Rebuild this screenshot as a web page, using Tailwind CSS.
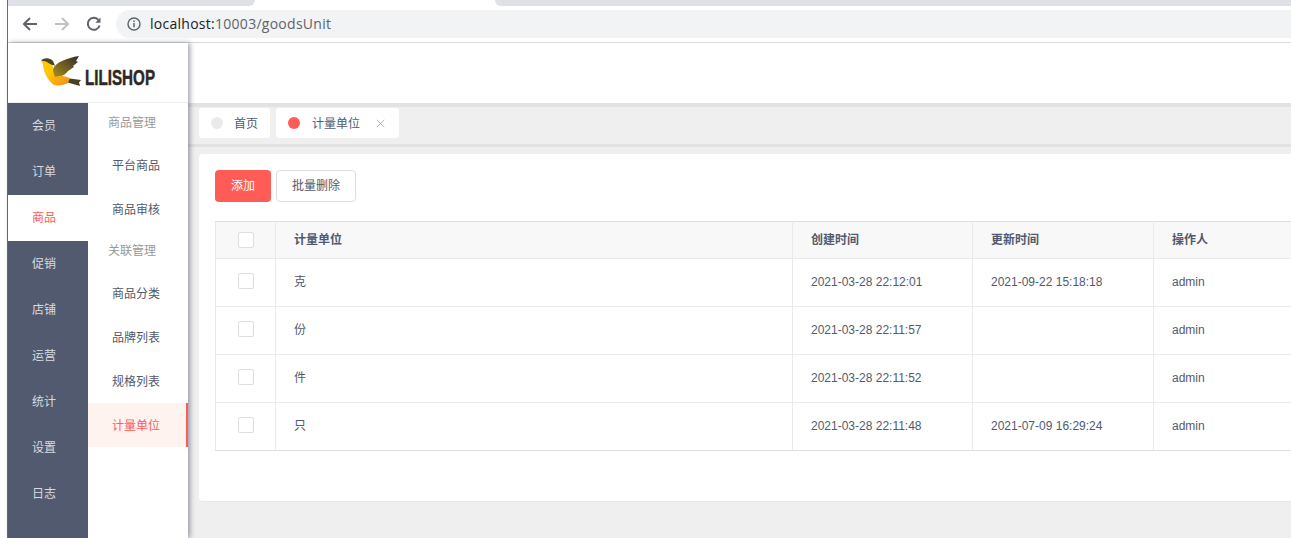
<!DOCTYPE html>
<html lang="zh">
<head>
<meta charset="utf-8">
<script src="https://cdn.jsdelivr.net/npm/@tailwindcss/browser@4"></script>
<title>goodsUnit</title>
</head>
<body class="w-[1291px] h-[538px] overflow-hidden bg-white font-['Liberation_Sans','Noto_Sans_CJK_SC',sans-serif] text-xs text-[#515a6e]">
<div class="flex h-[538px]">
  <div class="w-[8px] shrink-0 bg-white border-r border-[#6b6b6b]"></div>
  <div class="flex-1 min-w-0 flex flex-col">
    <!-- browser tab strip -->
    <div class="h-[6px] shrink-0 flex bg-white">
      <div class="w-[247px] bg-[#dee1e6] rounded-br-lg"></div>
      <div class="w-[240px]"></div>
      <div class="flex-1 bg-[#dee1e6] rounded-bl-lg"></div>
    </div>
    <!-- browser toolbar -->
    <div class="h-[37px] shrink-0 flex items-center bg-white border-b border-[#d9d9d9] pl-[14px] pb-[1px]">
      <svg class="w-4 h-4 shrink-0" viewBox="0 0 16 16" fill="none" stroke="#5f6368" stroke-width="2"><path d="M15 8H2M8 2 2 8l6 6"/></svg>
      <svg class="w-4 h-4 shrink-0 ml-[16px]" viewBox="0 0 16 16" fill="none" stroke="#bdc1c6" stroke-width="2"><path d="M1 8h13M8 2l6 6-6 6"/></svg>
      <svg class="w-4 h-4 shrink-0 ml-[16px]" viewBox="0 0 16 16" fill="none" stroke="#5f6368" stroke-width="2"><path d="M13.6 9.5A6 6 0 1 1 12.3 3.800"/><path d="M14.500 1.500v5.200H9.300z" fill="#5f6368" stroke="none"/></svg>
      <div class="flex-1 h-[28px] ml-[14px] rounded-l-[14px] bg-[#f1f3f4] flex items-center pl-[11px] font-['Open_Sans',sans-serif] text-[14px] tracking-[.27px]">
        <svg class="w-[14px] h-[14px] shrink-0" viewBox="0 0 14 14" fill="none"><circle cx="7" cy="7" r="6" stroke="#5f6368" stroke-width="1.400"/><path d="M7 6v4.200M7 3.400v1.500" stroke="#5f6368" stroke-width="1.500"/></svg>
        <span class="ml-[9px] pt-[1px] text-[#202124]">localhost:<span class="text-[#5f6368]">10003/goodsUnit</span></span>
      </div>
    </div>
    <div class="flex-1 min-h-0 flex">
      <!-- sidebar -->
      <aside class="relative z-10 w-[180px] shrink-0 flex flex-col bg-white shadow-[2px_0_5px_rgba(40,45,70,0.45)]">
        <div class="h-[60px] shrink-0 border-b border-[#eeeeee] flex items-start pl-[32px] pt-[12px]">
          <svg class="w-[43px] h-[32px] shrink-0" viewBox="0 0 43 32">
            <defs>
              <linearGradient id="w" x1="1" y1="0" x2="0" y2="1"><stop offset="0" stop-color="#2f2a28"/><stop offset="1" stop-color="#a8901a"/></linearGradient>
              <linearGradient id="b" x1="0" y1="0" x2="1" y2="1"><stop offset="0.400" stop-color="#ffc800"/><stop offset="1" stop-color="#f08a24"/></linearGradient>
            </defs>
            <path d="M26 23 41 25l-2 2.500 1 3.500-14-4z" fill="#4a4320"/>
            <path d="M1 5.500 3 9C3 15 7 25 14 30c5 1 10 0 14-2l2-5-10-3-7-6-1-7L7 4z" fill="url(#b)"/>
            <path d="M1 5.500C4 2.500 10 2.500 13 6l2 4.500C11 10 9 8 6 6.500z" fill="#4b4428"/>
            <path d="M13 14C16 7 27 3 39 1l-3 5 2 1-5 4 1 1-6 4c-2 3-5 5-9 5l-4 1c-1-3-2-5-2-8z" fill="url(#w)"/>
          </svg>
          <span class="ml-[2px] mt-[13px] text-[22px] leading-[20px] font-bold text-[#2f2725] scale-x-[.69] origin-left [-webkit-text-stroke:0.5px_#2f2725]">LILISHOP</span>
        </div>
        <div class="flex-1 min-h-0 flex">
          <nav class="w-[80px] shrink-0 bg-[#515a6e] text-[#d7dae0]">
            <div class="h-[46px] pr-[8px] flex items-center justify-center">会员</div>
            <div class="h-[46px] pr-[8px] flex items-center justify-center">订单</div>
            <div class="h-[46px] pr-[8px] flex items-center justify-center bg-white text-[#ff5c58]">商品</div>
            <div class="h-[46px] pr-[8px] flex items-center justify-center">促销</div>
            <div class="h-[46px] pr-[8px] flex items-center justify-center">店铺</div>
            <div class="h-[46px] pr-[8px] flex items-center justify-center">运营</div>
            <div class="h-[46px] pr-[8px] flex items-center justify-center">统计</div>
            <div class="h-[46px] pr-[8px] flex items-center justify-center">设置</div>
            <div class="h-[46px] pr-[8px] flex items-center justify-center">日志</div>
          </nav>
          <nav class="flex-1 min-w-0">
            <div class="h-[40px] flex items-center pl-[20px] text-[#999999]">商品管理</div>
            <div class="h-[44px] pt-[2px] flex items-center pl-[24px]">平台商品</div>
            <div class="h-[44px] pt-[2px] flex items-center pl-[24px]">商品审核</div>
            <div class="h-[40px] flex items-center pl-[20px] text-[#999999]">关联管理</div>
            <div class="h-[44px] pt-[2px] flex items-center pl-[24px]">商品分类</div>
            <div class="h-[44px] pt-[2px] flex items-center pl-[24px]">品牌列表</div>
            <div class="h-[44px] pt-[2px] flex items-center pl-[24px]">规格列表</div>
            <div class="h-[44px] pt-[2px] flex items-center pl-[24px] bg-[#fff3ef] text-[#ff5c58] border-r-2 border-[#ff5c58]">计量单位</div>
          </nav>
        </div>
      </aside>
      <!-- main -->
      <main class="flex-1 min-w-0 flex flex-col bg-[#efefef] overflow-hidden">
        <div class="h-[60px] shrink-0 bg-white"></div>
        <div class="h-[44px] shrink-0 border-t-[4px] border-b-[3px] border-[#e2e2e2] bg-[#efefef] flex gap-[6px] pl-[11px] pt-[1px]">
          <div class="w-[71px] h-[30px] rounded-[3px] bg-white flex items-center pl-[12px] pt-[1px]">
            <span class="w-[12px] h-[12px] rounded-full bg-[#e8eaec] -mt-[1px]"></span>
            <span class="ml-[11px]">首页</span>
          </div>
          <div class="w-[123px] h-[30px] rounded-[3px] bg-white flex items-center pl-[12px] pt-[1px]">
            <span class="w-[12px] h-[12px] rounded-full bg-[#ff5c58] -mt-[1px]"></span>
            <span class="ml-[12px]">计量单位</span>
            <svg class="w-[9px] h-[9px] ml-[16px] -mt-[1px]" viewBox="0 0 9 9" fill="none" stroke="#b5b8bf" stroke-width="1"><path d="M.8.8l7.400 7.400M8.200.8.800 8.200"/></svg>
          </div>
        </div>
        <div class="ml-[11px] mt-[7px] w-[1200px] h-[348px] shrink-0 rounded-[4px] bg-white border-b border-[#e8e8e8] pt-[16px] pl-[16px]">
          <div class="flex gap-[5px]">
            <button class="w-[56px] h-[32px] rounded-[4px] bg-[#ff5c58] text-white">添加</button>
            <button class="w-[80px] h-[32px] rounded-[4px] bg-white border border-[#dcdee2] text-[#515a6e]">批量删除</button>
          </div>
          <table class="mt-[19px] w-[1200px] table-fixed border-collapse border border-[#dcdee2]">
            <colgroup><col class="w-[60px]"><col class="w-[517px]"><col class="w-[180px]"><col class="w-[181px]"><col></colgroup>
            <thead>
              <tr class="h-[37px] bg-[#f8f8f9] font-bold text-left">
                <th class="border border-[#e8eaec] border-t-[#dcdee2]"><span class="block mx-auto w-[16px] h-[16px] rounded-[2px] border border-[#dcdee2] bg-white"></span></th>
                <th class="border border-[#e8eaec] border-t-[#dcdee2] pl-[18px]">计量单位</th>
                <th class="border border-[#e8eaec] border-t-[#dcdee2] pl-[18px]">创建时间</th>
                <th class="border border-[#e8eaec] border-t-[#dcdee2] pl-[18px]">更新时间</th>
                <th class="border border-[#e8eaec] border-t-[#dcdee2] pl-[18px]">操作人</th>
              </tr>
            </thead>
            <tbody>
              <tr class="h-[48px]">
                <td class="border border-[#e8eaec] pb-[3px]"><span class="block mx-auto w-[16px] h-[16px] rounded-[2px] border border-[#dcdee2] bg-white"></span></td>
                <td class="border border-[#e8eaec] pl-[18px] pb-[2px]">克</td>
                <td class="border border-[#e8eaec] pl-[18px] pb-[2px]">2021-03-28 22:12:01</td>
                <td class="border border-[#e8eaec] pl-[18px] pb-[2px]">2021-09-22 15:18:18</td>
                <td class="border border-[#e8eaec] pl-[18px] pb-[2px]">admin</td>
              </tr>
              <tr class="h-[48px]">
                <td class="border border-[#e8eaec] pb-[3px]"><span class="block mx-auto w-[16px] h-[16px] rounded-[2px] border border-[#dcdee2] bg-white"></span></td>
                <td class="border border-[#e8eaec] pl-[18px] pb-[2px]">份</td>
                <td class="border border-[#e8eaec] pl-[18px] pb-[2px]">2021-03-28 22:11:57</td>
                <td class="border border-[#e8eaec] pl-[18px] pb-[2px]"></td>
                <td class="border border-[#e8eaec] pl-[18px] pb-[2px]">admin</td>
              </tr>
              <tr class="h-[48px]">
                <td class="border border-[#e8eaec] pb-[3px]"><span class="block mx-auto w-[16px] h-[16px] rounded-[2px] border border-[#dcdee2] bg-white"></span></td>
                <td class="border border-[#e8eaec] pl-[18px] pb-[2px]">件</td>
                <td class="border border-[#e8eaec] pl-[18px] pb-[2px]">2021-03-28 22:11:52</td>
                <td class="border border-[#e8eaec] pl-[18px] pb-[2px]"></td>
                <td class="border border-[#e8eaec] pl-[18px] pb-[2px]">admin</td>
              </tr>
              <tr class="h-[48px]">
                <td class="border border-[#e8eaec] border-b-[#dcdee2] pb-[3px]"><span class="block mx-auto w-[16px] h-[16px] rounded-[2px] border border-[#dcdee2] bg-white"></span></td>
                <td class="border border-[#e8eaec] border-b-[#dcdee2] pl-[18px] pb-[2px]">只</td>
                <td class="border border-[#e8eaec] border-b-[#dcdee2] pl-[18px] pb-[2px]">2021-03-28 22:11:48</td>
                <td class="border border-[#e8eaec] border-b-[#dcdee2] pl-[18px] pb-[2px]">2021-07-09 16:29:24</td>
                <td class="border border-[#e8eaec] border-b-[#dcdee2] pl-[18px] pb-[2px]">admin</td>
              </tr>
            </tbody>
          </table>
        </div>
      </main>
    </div>
  </div>
</div>
</body>
</html>
